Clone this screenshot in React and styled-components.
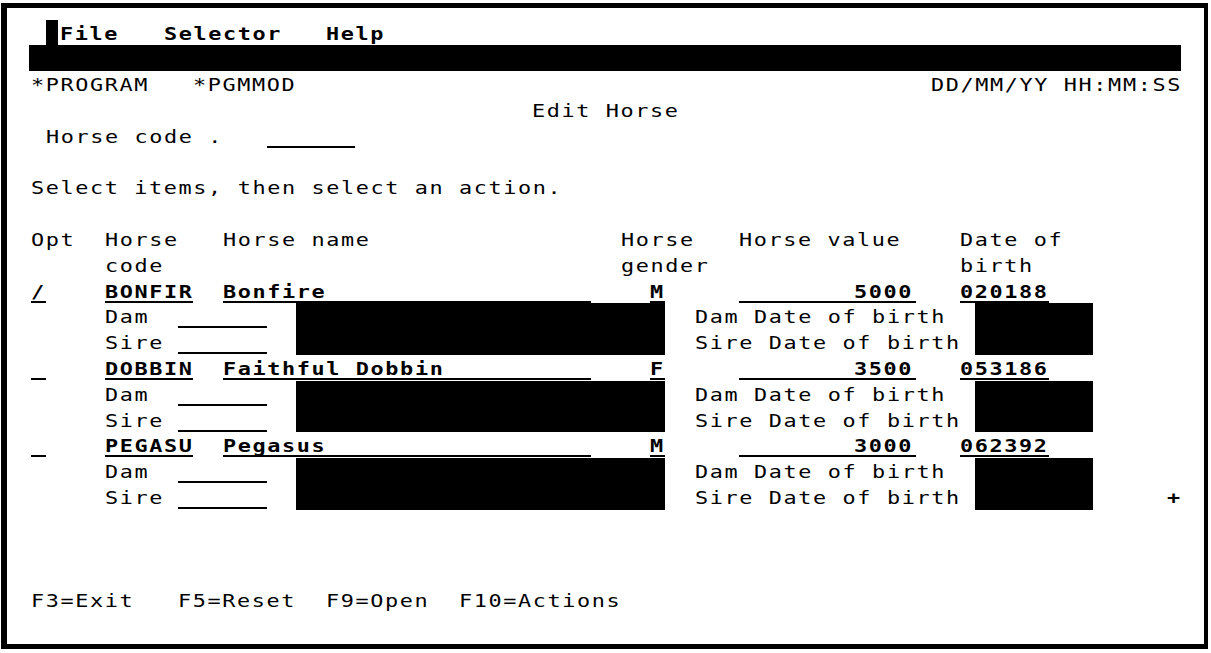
import React from "react";
import styled, { createGlobalStyle, css } from "styled-components";

const CW = 14.76; // cell width
const RH = 25.8; // row height
const FS = 18.5; // font size
const SX = 1.18; // horizontal glyph stretch
const ADV = FS * 0.60205;
const LS = CW / SX - ADV;

const Global = createGlobalStyle`
  html, body { margin: 0; padding: 0; background: #fff; }
  #root { width: 1211px; height: 653px; overflow: hidden; }
`;

const Frame = styled.div`
  box-sizing: border-box;
  margin: 3px 0 0 1px;
  width: 1207px;
  height: 646px;
  border-style: solid;
  border-color: #000;
  border-width: 5px 4px 5px 6px;
  padding: 11.6px 0 0 9px;
  background: #fff;
`;

const Screen = styled.div`
  display: grid;
  grid-template-columns: repeat(80, ${CW}px);
  grid-template-rows: repeat(24, ${RH}px);
  color: #000;
  font-family: "DejaVu Sans Mono", "Liberation Mono", monospace;
  font-size: ${FS}px;
`;

const place = css`
  grid-column: ${(p) => p.$c + 1} / span ${(p) => p.$w || 1};
  grid-row: ${(p) => p.$r + 1} / span ${(p) => p.$h || 1};
`;

const Chars = styled.span`
  display: inline-block;
  white-space: pre;
  line-height: ${RH}px;
  padding-top: 1px;
  letter-spacing: ${LS}px;
  transform: scaleX(${SX});
  transform-origin: ${(p) => (p.$right ? "right" : "left")} center;
  font-weight: ${(p) => (p.$bold ? 700 : 400)};
  margin-right: ${(p) => (p.$right ? `${CW - CW / SX}px` : "0")};
`;

const Label = styled.div`
  ${place};
  align-self: start;
  justify-self: start;
`;

const Field = styled.div`
  ${place};
  align-self: start;
  box-sizing: content-box;
  height: 23px;
  border-bottom: 2px solid #000;
  display: flex;
  align-items: flex-start;
  justify-content: ${(p) => (p.$right ? "flex-end" : "flex-start")};
`;

const Blackout = styled.div`
  ${place};
  background: #000;
`;

const Cursor = styled.div`
  ${place};
  width: 12px;
  background: #000;
`;

const Bar = styled.div`
  ${place};
  background: #000;
  margin-left: -2px;
`;

function Text({ c, r, bold, children }) {
  const s = String(children);
  return (
    <Label $c={c} $r={r} $w={s.length}>
      <Chars $bold={bold}>{s}</Chars>
    </Label>
  );
}

function Input({ c, r, w, bold, right, value = "" }) {
  return (
    <Field $c={c} $r={r} $w={w} $right={right}>
      {value && (
        <Chars $bold={bold} $right={right}>
          {value}
        </Chars>
      )}
    </Field>
  );
}

const horses = [
  { opt: "/", code: "BONFIR", name: "Bonfire", gender: "M", value: "5000", dob: "020188" },
  { opt: "", code: "DOBBIN", name: "Faithful Dobbin", gender: "F", value: "3500", dob: "053186" },
  { opt: "", code: "PEGASU", name: "Pegasus", gender: "M", value: "3000", dob: "062392" },
];

const fkeys = [
  { c: 1, t: "F3=Exit" },
  { c: 11, t: "F5=Reset" },
  { c: 21, t: "F9=Open" },
  { c: 30, t: "F10=Actions" },
];

export default function App() {
  return (
    <>
      <Global />
      <Frame>
        <Screen>
          <Cursor $c={2} $r={0} />
          <Text c={3} r={0} bold>File</Text>
          <Text c={10} r={0} bold>Selector</Text>
          <Text c={21} r={0} bold>Help</Text>
          <Bar $c={1} $r={1} $w={78} />

          <Text c={1} r={2}>*PROGRAM</Text>
          <Text c={12} r={2}>*PGMMOD</Text>
          <Text c={62} r={2}>DD/MM/YY HH:MM:SS</Text>
          <Text c={35} r={3}>Edit Horse</Text>
          <Text c={2} r={4}>Horse code .</Text>
          <Input c={17} r={4} w={6} />
          <Text c={1} r={6}>Select items, then select an action.</Text>

          <Text c={1} r={8}>Opt</Text>
          <Text c={6} r={8}>Horse</Text>
          <Text c={6} r={9}>code</Text>
          <Text c={14} r={8}>Horse name</Text>
          <Text c={41} r={8}>Horse</Text>
          <Text c={41} r={9}>gender</Text>
          <Text c={49} r={8}>Horse value</Text>
          <Text c={64} r={8}>Date of</Text>
          <Text c={64} r={9}>birth</Text>

          {horses.map((h, i) => {
            const r = 10 + i * 3;
            return (
              <React.Fragment key={h.code}>
                <Input c={1} r={r} w={1} bold value={h.opt} />
                <Input c={6} r={r} w={6} bold value={h.code} />
                <Input c={14} r={r} w={25} bold value={h.name} />
                <Input c={43} r={r} w={1} bold value={h.gender} />
                <Input c={49} r={r} w={12} bold right value={h.value} />
                <Input c={64} r={r} w={6} bold value={h.dob} />

                <Text c={6} r={r + 1}>Dam</Text>
                <Input c={11} r={r + 1} w={6} />
                <Text c={6} r={r + 2}>Sire</Text>
                <Input c={11} r={r + 2} w={6} />
                <Blackout $c={19} $r={r + 1} $w={25} $h={2} />
                <Text c={46} r={r + 1}>Dam Date of birth</Text>
                <Text c={46} r={r + 2}>Sire Date of birth</Text>
                <Blackout $c={65} $r={r + 1} $w={8} $h={2} />
              </React.Fragment>
            );
          })}

          <Text c={78} r={18} bold>+</Text>

          {fkeys.map((k) => (
            <Text key={k.t} c={k.c} r={22}>{k.t}</Text>
          ))}
        </Screen>
      </Frame>
    </>
  );
}
